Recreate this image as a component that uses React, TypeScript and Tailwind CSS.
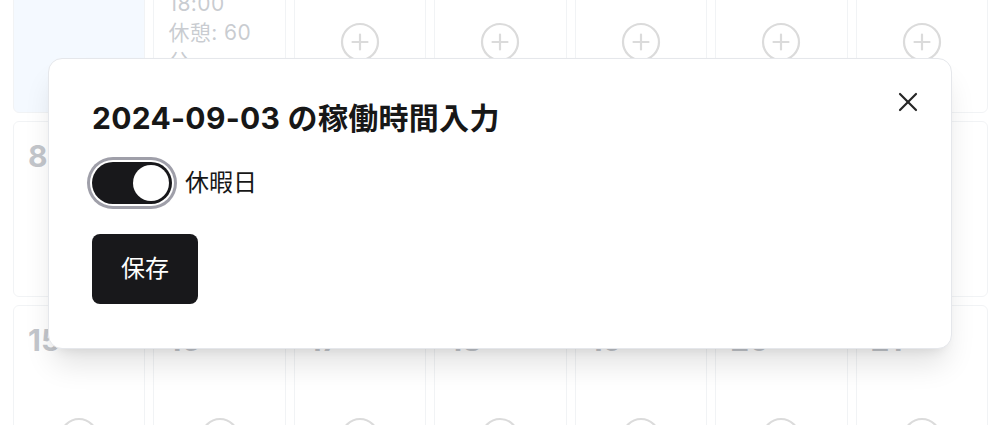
import { X } from 'lucide-react'

type Day = {
  date: number
  entry?: string[]
  today?: boolean
  add?: boolean
}

const weeks: { height: string; days: Day[] }[] = [
  {
    height: 'h-[203px]',
    days: [
      { date: 1, today: true },
      { date: 2, entry: ['9:00 - 18:00', '休憩: 60 分'] },
      { date: 3, add: true },
      { date: 4, add: true },
      { date: 5, add: true },
      { date: 6, add: true },
      { date: 7, add: true },
    ],
  },
  {
    height: 'h-[176px]',
    days: [8, 9, 10, 11, 12, 13, 14].map((d) => ({ date: d, add: true })),
  },
  {
    height: 'h-[176px]',
    days: [15, 16, 17, 18, 19, 20, 21].map((d) => ({ date: d, add: true })),
  },
]

function PlusCircle() {
  return (
    <svg width="40" height="40" viewBox="0 0 40 40" fill="none" stroke="currentColor" strokeWidth="2.2" strokeLinecap="round">
      <circle cx="20" cy="20" r="18" />
      <path d="M12.5 20h15M20 12.5v15" />
    </svg>
  )
}

function DayCell({ day, height }: { day: Day; height: string }) {
  return (
    <div
      className={`${height} flex flex-col px-[14px] pt-[19px] border border-gray-300 rounded-md ${
        day.today ? 'bg-blue-100 border-blue-100' : 'bg-white'
      }`}
    >
      <div className="text-[30px] leading-[30px] font-bold text-gray-700">{day.date}</div>
      {day.entry && (
        <div className="pr-1 text-[21px] leading-[29px] tracking-[0.02em] text-gray-600">
          {day.entry.map((line) => (
            <div key={line}>{line}</div>
          ))}
        </div>
      )}
      {day.add && (
        <div className="mt-[62px] flex justify-center text-[#858585]">
          <PlusCircle />
        </div>
      )}
    </div>
  )
}

export default function App() {
  return (
    <div
      className="relative h-[425px] w-full overflow-hidden bg-white"
      style={{ fontFamily: '"Inter", "Noto Sans CJK JP", sans-serif' }}
    >
      {/* calendar (scrolled) */}
      <div className="-mt-[90px] pl-[13px] pr-[12px] flex flex-col gap-2">
        {weeks.map((w, i) => (
          <div key={i} className="grid grid-cols-7 gap-2">
            {w.days.map((d) => (
              <DayCell key={d.date} day={d} height={w.height} />
            ))}
          </div>
        ))}
      </div>

      {/* overlay */}
      <div className="absolute inset-0 bg-white/70" />

      {/* dialog */}
      <div className="absolute left-0 right-0 top-[58px] mx-auto w-[904px] rounded-[14px] border border-gray-200 bg-white shadow-[0_20px_30px_-6px_rgba(0,0,0,0.12),0_8px_12px_-8px_rgba(0,0,0,0.1)]">
        <div className="flex flex-col items-start pt-[44px] px-[43px] pb-[44px]">
          <h2 className="text-[30px] leading-[30px] font-bold tracking-[0.01em] text-neutral-900">
            2024-09-03 の稼働時間入力
          </h2>

          <div className="mt-[29px] flex items-center gap-[13px]">
            <button
              type="button"
              role="switch"
              aria-checked="true"
              className="flex h-[42px] w-[80px] items-center justify-end rounded-full bg-zinc-900 px-[3px] ring-[3px] ring-zinc-400 ring-offset-2 ring-offset-white"
            >
              <span className="block h-9 w-9 rounded-full bg-white" />
            </button>
            <span className="text-[24px] leading-8 text-neutral-900">休暇日</span>
          </div>

          <button
            type="button"
            className="mt-[30px] h-[70px] w-[106px] rounded-[8px] bg-[#18181b] text-[24px] text-white"
          >
            保存
          </button>
        </div>

        <button type="button" className="absolute right-[27px] top-[27px] text-neutral-800">
          <X size={32} strokeWidth={1.6} />
        </button>
      </div>
    </div>
  )
}
